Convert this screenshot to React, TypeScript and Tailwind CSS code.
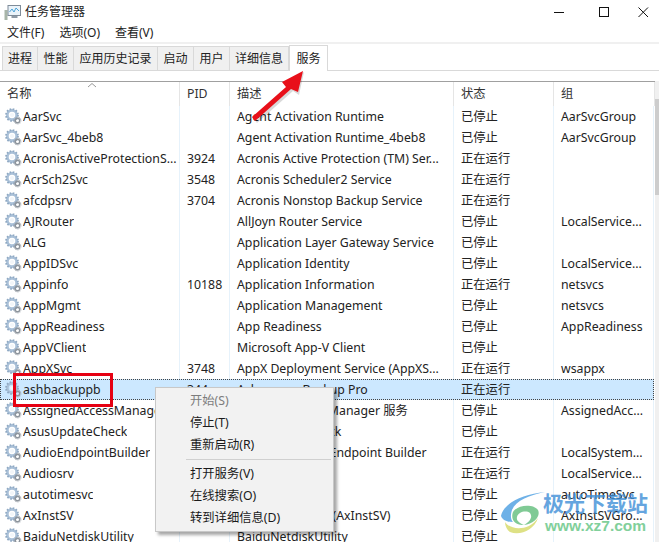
import React from "react";

type Row = [string, string, string, string, string];
const rows: Row[] = [
  ["AarSvc", "", "Agent Activation Runtime", "已停止", "AarSvcGroup"],
  ["AarSvc_4beb8", "", "Agent Activation Runtime_4beb8", "已停止", "AarSvcGroup"],
  ["AcronisActiveProtectionS...", "3924", "Acronis Active Protection (TM) Ser...", "正在运行", ""],
  ["AcrSch2Svc", "3548", "Acronis Scheduler2 Service", "正在运行", ""],
  ["afcdpsrv", "3704", "Acronis Nonstop Backup Service", "正在运行", ""],
  ["AJRouter", "", "AllJoyn Router Service", "已停止", "LocalService..."],
  ["ALG", "", "Application Layer Gateway Service", "已停止", ""],
  ["AppIDSvc", "", "Application Identity", "已停止", "LocalService..."],
  ["Appinfo", "10188", "Application Information", "正在运行", "netsvcs"],
  ["AppMgmt", "", "Application Management", "已停止", "netsvcs"],
  ["AppReadiness", "", "App Readiness", "已停止", "AppReadiness"],
  ["AppVClient", "", "Microsoft App-V Client", "已停止", ""],
  ["AppXSvc", "3748", "AppX Deployment Service (AppXS...", "正在运行", "wsappx"],
  ["ashbackuppb", "344", "Ashampoo Backup Pro", "正在运行", ""],
  ["AssignedAccessManager...", "", "AssignedAccessManager 服务", "已停止", "AssignedAcc..."],
  ["AsusUpdateCheck", "", "AsusUpdateCheck", "已停止", ""],
  ["AudioEndpointBuilder", "", "Windows Audio Endpoint Builder", "正在运行", "LocalSystem..."],
  ["Audiosrv", "", "Windows Audio", "正在运行", "LocalService..."],
  ["autotimesvc", "", "手机网络时间", "已停止", "autoTimeSvc"],
  ["AxInstSV", "", "ActiveX Installer (AxInstSV)", "已停止", "AxInstSVGro..."],
  ["BaiduNetdiskUtility", "", "BaiduNetdiskUtility", "已停止", ""],
];

const tabs: [string, string][] = [
  ["进程", "w-[36px]"],
  ["性能", "w-[37px]"],
  ["应用历史记录", "w-[85px]"],
  ["启动", "w-[37px]"],
  ["用户", "w-[37px]"],
  ["详细信息", "w-[60px]"],
];

function Gear() {
  return (
    <svg width="17" height="17" viewBox="0 0 17 17" className="shrink-0">
      <circle cx="7" cy="7" r="4.6" fill="none" stroke="#a9c0d8" strokeWidth="2.6" />
      <circle cx="7" cy="7" r="6" fill="none" stroke="#8fa8c2" strokeWidth="1.8" strokeDasharray="1.6 1.54" />
      <circle cx="7" cy="7" r="2.1" fill="#f2f6fa" />
      <circle cx="12.5" cy="12.5" r="2.2" fill="none" stroke="#8d949c" strokeWidth="1.4" />
      <circle cx="12.5" cy="12.5" r="3.4" fill="none" stroke="#9aa1a9" strokeWidth="1.1" strokeDasharray="1 1.1" />
    </svg>
  );
}

function AppIcon() {
  return (
    <svg width="17" height="17" viewBox="0 0 17 17" className="shrink-0">
      <rect x="0.5" y="6" width="3" height="10" fill="#a8b5a8" />
      <rect x="4" y="1.5" width="12.5" height="10" fill="#eaf3fa" stroke="#7f8c99" />
      <path d="M5.5 8 L8 5 L10 8 L12 4 L15 7" fill="none" stroke="#4aa3d8" strokeWidth="1" />
      <rect x="7.5" y="12" width="6" height="2" fill="#8e9aa6" />
    </svg>
  );
}

const cols = ["w-[180px]", "w-[50px]", "w-[224px]", "w-[100px]", "w-[100px]"];

function ContextItem({ label, disabled }: { label: string; disabled?: boolean }) {
  return (
    <div className={`h-[22px] pl-[34px] leading-[22px] ${disabled ? "text-[#7d7d7d]" : "text-[#1a1a1a]"}`}>{label}</div>
  );
}

export default function App() {
  return (
    <div
      className="relative w-[659px] h-[542px] overflow-hidden bg-white text-[#222] text-[12.3px]"
      style={{ fontFamily: '"Noto Sans", "Noto Sans CJK SC", sans-serif' }}
    >
      {/* title bar */}
      <div className="h-[24px] flex items-center pl-[4px]">
        <AppIcon />
        <span className="ml-[4px] text-[#222] text-[12px]">任务管理器</span>
        <div className="ml-auto flex items-center text-black">
          <svg width="46" height="20" viewBox="0 0 46 20"><path d="M13 10.5H23" stroke="#111" strokeWidth="1" /></svg>
          <svg width="46" height="20" viewBox="0 0 46 20"><rect x="12.5" y="5.5" width="9" height="9" fill="none" stroke="#111" strokeWidth="1" /></svg>
          <svg width="26" height="20" viewBox="0 0 26 20"><path d="M5.5 5.5L15 15M15 5.5L5.5 15" stroke="#111" strokeWidth="1" /></svg>
        </div>
      </div>
      {/* menu */}
      <div className="h-[18px] flex items-center pl-[7px] gap-[15px] text-[12px]">
        <span>文件(F)</span>
        <span>选项(O)</span>
        <span>查看(V)</span>
      </div>
      <div className="h-[2px] bg-[#f0f0f0]" />
      {/* tabs */}
      <div className="h-[27px] bg-white flex items-end pl-[2px] border-b border-[#d9d9d9] relative">
        {tabs.map(([t, w]) => (
          <div key={t} className={`${w} h-[24px] bg-[#f0f0f0] border border-b-0 border-[#d9d9d9] -mr-px flex items-center justify-center text-[12px] leading-none`}>
            {t}
          </div>
        ))}
        <div className="ml-[1px] w-[39px] h-[26px] -mb-px bg-white border border-b-0 border-[#d9d9d9] flex items-center justify-center text-[12px] leading-none">
          服务
        </div>
      </div>
      <div className="h-[10px]" />
      {/* header */}
      <div className="h-[25px] flex border-t border-[#a0a0a0] relative">
        {["名称", "PID", "描述", "状态", "组"].map((h, i) => (
          <div key={h} className={`${cols[i]} pl-[7px] leading-[24px] border-r border-[#e5e5e5] text-[#333] ${i === 4 ? "w-[101px]" : ""}`}>
            {h}
          </div>
        ))}
        <svg className="absolute left-[87px] top-0" width="10" height="6" viewBox="0 0 10 6">
          <path d="M1 5L5 1.5L9 5" fill="none" stroke="#999" />
        </svg>
      </div>
      {/* rows */}
      <div className="relative">
        {rows.map((r) => {
          const selected = r[0] === "ashbackuppb";
          const sep = selected ? "border-transparent" : "border-[#e6f2fb]";
          return (
            <div key={r[0]} className={`h-[21px] flex ${selected ? "bg-[#cce8ff] outline-1 outline-dotted outline-[#444] -outline-offset-1 mr-[5px]" : ""}`}>
              <div className={`${cols[0]} pl-[5px] flex items-center gap-[1px] border-r ${sep}`}>
                <Gear />
                <span className="h-[21px] leading-[21px] whitespace-nowrap overflow-hidden">{r[0]}</span>
              </div>
              <div className={`${cols[1]} pl-[7px] leading-[21px] border-r ${sep}`}>{r[1]}</div>
              <div className={`${cols[2]} pl-[7px] leading-[21px] whitespace-nowrap overflow-hidden border-r ${sep}`}>{r[2]}</div>
              <div className={`${cols[3]} pl-[7px] leading-[21px] border-r ${sep}`}>{r[3]}</div>
              <div className={`w-[100px] pl-[7px] leading-[21px] whitespace-nowrap overflow-hidden border-r ${sep}`}>{r[4]}</div>
            </div>
          );
        })}
      </div>
      {/* scrollbar */}
      <div className="absolute right-0 top-[81px] bottom-0 w-[4px] bg-[#f0f0f0]">
        <div className="mt-[18px] h-[96px] bg-[#cdcdcd]" />
      </div>
      {/* context menu */}
      <div className="absolute left-[155px] top-[387px] w-[179px] h-[145px] bg-[#f2f2f2] border border-[#c8c8c8] shadow-[3px_3px_3px_rgba(0,0,0,0.35)] pt-[2px]">
        <ContextItem label="开始(S)" disabled />
        <ContextItem label="停止(T)" />
        <ContextItem label="重新启动(R)" />
        <div className="h-px bg-[#d0d0d0] my-[3px] ml-[30px] mr-[2px]" />
        <ContextItem label="打开服务(V)" />
        <ContextItem label="在线搜索(O)" />
        <ContextItem label="转到详细信息(D)" />
      </div>
      {/* red box */}
      <div className="absolute left-[13px] top-[373px] w-[100px] h-[34px] border-[3.5px] border-[#e60012]" />
      {/* arrow */}
      <svg className="absolute left-[245px] top-[65px]" width="70" height="60" viewBox="0 0 70 60">
        <path d="M9 54 L43 24 L38 18 L59 7 L54 30 L48 26 L12 58 Z" fill="#000" opacity="0.15" />
        <path d="M7 52 L41 22 L37 17 L58 6 L53 27 L46 24 L10 56 Z" fill="#e8101a" />
      </svg>
      {/* watermark */}
      <div className="absolute left-[498px] top-[490px] w-[161px] h-[52px] pointer-events-none">
        <svg className="absolute left-[2px] top-[2px]" width="46" height="42" viewBox="0 0 46 42">
          <path d="M1 24 C3 12 22 2 45 0 C30 3 16 8 12 18 C10 24 11 28 13 30 C8 30 3 29 1 24 Z" fill="#5ea9e4" opacity="0.9" />
          <path d="M13 20 C18 12 34 12 38 18 C41 24 34 32 24 33 C30 30 33 25 30 21 C26 18 18 20 17 25 C16 29 20 31 24 33 C16 34 10 28 13 20 Z" fill="#72c48a" opacity="0.9" />
          <path d="M5 30 C10 38 28 40 38 26 C34 38 20 44 10 40 C7 38 5 34 5 30 Z" fill="#d8dc70" opacity="0.85" />
        </svg>
        <div className="absolute left-[45px] top-[0px] text-[#3f8fd8] text-[21px] font-bold leading-[26px] whitespace-nowrap opacity-80">极光下载站</div>
        <div
          className="absolute left-[47px] top-[27px] text-[#6cc88a] text-[15.5px] font-bold leading-[18px] whitespace-nowrap opacity-85"
          style={{ fontFamily: '"Liberation Sans", sans-serif' }}
        >
          www.xz7.com
        </div>
      </div>
    </div>
  );
}
